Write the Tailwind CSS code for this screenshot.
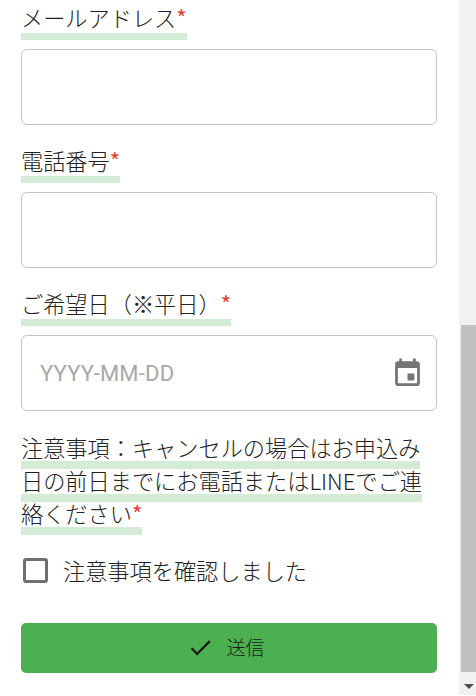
<!DOCTYPE html>
<html lang="ja">
  <head>
    <meta charset="UTF-8" />
    <title>Form</title>
    <script src="https://cdn.jsdelivr.net/npm/@tailwindcss/browser@4"></script>
  </head>
  <body class="h-[696px] overflow-hidden bg-white">
    <div class="flex h-[696px] font-['Noto_Sans_CJK_JP','Noto_Sans',sans-serif] font-light text-[#222]">
      <form class="w-[459px] shrink-0 px-[21px] pt-[1px]">
        <div class="mb-[19px]">
          <div class="text-[22.2px] leading-[33px] mb-[15px]">
            <span class="pb-[7px] bg-[linear-gradient(transparent_81%,#d4ebd5_81%)]">メールアドレス<span class="text-[#e53935] font-normal">*</span></span>
          </div>
          <input type="text" class="block w-[416px] h-[76px] rounded-[6px] border border-[#c4c4c4] bg-white" />
        </div>
        <div class="mb-[19px]">
          <div class="text-[22.2px] leading-[33px] mb-[15px]">
            <span class="pb-[7px] bg-[linear-gradient(transparent_81%,#d4ebd5_81%)]">電話番号<span class="text-[#e53935] font-normal">*</span></span>
          </div>
          <input type="text" class="block w-[416px] h-[76px] rounded-[6px] border border-[#c4c4c4] bg-white" />
        </div>
        <div class="mb-[20px]">
          <div class="text-[22.2px] leading-[33px] mb-[15px]">
            <span class="pb-[7px] bg-[linear-gradient(transparent_81%,#d4ebd5_81%)]">ご希望日（※平日）<span class="text-[#e53935] font-normal">*</span></span>
          </div>
          <div class="flex items-center justify-between w-[416px] h-[76px] rounded-[6px] border border-[#c4c4c4] pl-[18px] pr-[12px]">
            <input type="text" placeholder="YYYY-MM-DD" class="w-[300px] text-[22px] font-['Roboto',sans-serif] font-normal tracking-[0.2px] outline-none placeholder:text-[#a8a8a8]" />
            <svg class="w-[33px] h-[33px]" viewBox="0 0 24 24" fill="#757575"><path d="M17 12h-5v5h5v-5zM16 1v2H8V1H6v2H5c-1.11 0-1.99.9-1.99 2L3 19c0 1.1.89 2 2 2h14c1.1 0 2-.9 2-2V5c0-1.1-.9-2-2-2h-1V1h-2zm3 18H5V8h14v11z"/></svg>
          </div>
        </div>
        <div class="text-[22.2px] leading-[33px] mb-[24px]">
          <span class="pb-[6px] bg-[linear-gradient(transparent_80%,#d4ebd5_80%)]">注意事項：キャンセルの場合はお申込み日の前日までにお電話またはLINEでご連絡ください<span class="text-[#e53935] font-normal">*</span></span>
        </div>
        <label class="flex items-center gap-[15px] h-[33px] pl-[2px] text-[22px] mb-[36px]">
          <span class="w-[25px] h-[25px] rounded-[3px] border-[3px] border-[#6f6f6f]"></span>
          <span class="text-[22.2px]">注意事項を確認しました</span>
        </label>
        <button type="button" class="flex items-center justify-center gap-[12px] w-[416px] h-[50px] rounded-[5px] bg-[#4caf50] text-[19px] text-[#1a1a1a] pr-[6px] pb-[1px]">
          <svg class="w-[27px] h-[27px]" viewBox="0 0 24 24" fill="#1a1a1a"><path d="M9 16.17 4.83 12l-1.42 1.41L9 19 21 7l-1.41-1.41z"/></svg>
          <span>送信</span>
        </button>
      </form>
      <div class="flex flex-col w-[17px] h-[695px] bg-[#f1f1f1] pl-[2px]">
        <div class="flex-1 pt-[325px] pb-[6px]">
          <div class="h-full bg-[#c1c1c1]"></div>
        </div>
        <div class="flex h-[17px] items-center justify-center pl-[1px]">
          <div class="w-0 h-0 border-x-[5px] border-x-transparent border-t-[5px] border-t-[#505050]"></div>
        </div>
      </div>
    </div>
  </body>
</html>
